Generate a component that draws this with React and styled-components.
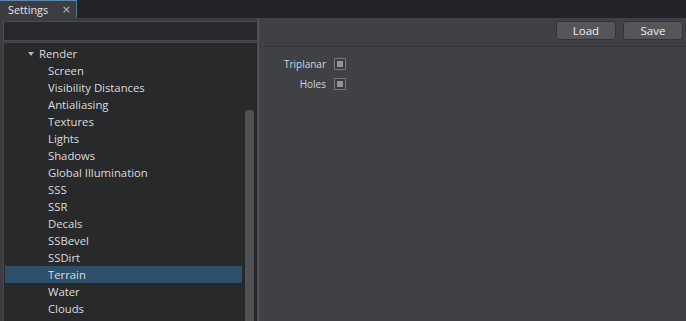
import React from "react";
import styled, { createGlobalStyle } from "styled-components";

const Global = createGlobalStyle`
  html, body { margin: 0; padding: 0; background: #232427; }
  body { font-family: "Open Sans", "Noto Sans", sans-serif; font-size: 11.3px; color: #d6d6d6; }
  * { box-sizing: border-box; }
`;

const Window = styled.div`
  width: 686px;
  height: 321px;
  display: flex;
  flex-direction: column;
  overflow: hidden;
`;

const TabBar = styled.div`
  height: 18px;
  background: #222326;
  display: flex;
  align-items: stretch;
`;

const Tab = styled.div`
  width: 77px;
  background: #3b3d41;
  border-top: 1px solid #5d86aa;
  border-right: 1px solid #4f7496;
  display: flex;
  align-items: center;
  justify-content: space-between;
  padding: 0 5px 0 8px;
  color: #e6e6e6;
  font-size: 10.8px;
  line-height: 16px;
`;

const Close = styled.span`
  color: #b8b9bc;
  font-size: 11px;
  font-family: "DejaVu Sans", sans-serif;
`;

const Body = styled.div`
  flex: 1;
  display: flex;
  background: #3c3d41;
  min-height: 0;
`;

const Left = styled.div`
  width: 258px;
  padding: 3px 0 0 3px;
  display: flex;
  flex-direction: column;
  gap: 1px;
`;

const Search = styled.div`
  height: 20px;
  background: #27282b;
  border: 1px solid #4a4b4f;
`;

const Tree = styled.div`
  flex: 1;
  background: #28292b;
  border: 1px solid #47484c;
  border-bottom: none;
  padding: 2px 0 0 1px;
  position: relative;
  overflow: hidden;
`;

const Row = styled.div`
  height: 17px;
  width: 237px;
  display: flex;
  align-items: center;
  padding-left: ${(p) => p.$indent}px;
  background: ${(p) => (p.$selected ? "#2c5069" : "transparent")};
  color: #dcdcdc;
  white-space: nowrap;
`;

const Arrow = styled.span`
  width: 0;
  height: 0;
  border-left: 3.5px solid transparent;
  border-right: 3.5px solid transparent;
  border-top: 4px solid #b4b5b8;
  margin-right: 5px;
`;

const ScrollThumb = styled.div`
  position: absolute;
  left: 241px;
  top: 67px;
  width: 9px;
  bottom: 0;
  background: #505155;
  border-radius: 3px 3px 0 0;
`;

const Divider = styled.div`
  width: 1px;
  background: #56575b;
`;

const Right = styled.div`
  flex: 1;
  background: #404145;
  display: flex;
  flex-direction: column;
`;

const Toolbar = styled.div`
  height: 29px;
  margin-left: 5px;
  border-bottom: 1px solid #323337;
  display: flex;
  justify-content: flex-end;
  align-items: flex-start;
  gap: 7px;
  padding: 3px 3px 0 0;
`;

const Button = styled.button`
  width: 60px;
  height: 19px;
  background: #55565a;
  border: 1px solid #333438;
  border-radius: 3px;
  color: #ececec;
  font-family: "Open Sans", "Noto Sans", sans-serif;
  font-size: 11.5px;
  padding: 0;
  line-height: 16px;
`;

const Form = styled.div`
  display: grid;
  grid-template-columns: 67px 12px;
  column-gap: 8px;
  row-gap: 8px;
  padding: 11px 0 0 0;
  align-items: center;
`;

const Label = styled.span`
  text-align: right;
  color: #cfd5e0;
  font-size: 10px;
  line-height: 12px;
`;

const Check = styled.span`
  width: 12px;
  height: 12px;
  border: 1px solid #77787c;
  background: #3a3b3e;
  padding: 2px;
  display: block;
  &::after {
    content: "";
    display: block;
    width: 6px;
    height: 6px;
    background: #939498;
  }
`;

const items = [
  "Screen",
  "Visibility Distances",
  "Antialiasing",
  "Textures",
  "Lights",
  "Shadows",
  "Global Illumination",
  "SSS",
  "SSR",
  "Decals",
  "SSBevel",
  "SSDirt",
  "Terrain",
  "Water",
  "Clouds",
];

export default function App() {
  return (
    <>
      <Global />
      <Window>
        <TabBar>
          <Tab>
            <span>Settings</span>
            <Close>×</Close>
          </Tab>
        </TabBar>
        <Body>
          <Left>
            <Search />
            <Tree>
              <Row $indent={23}>
                <Arrow />
                Render
              </Row>
              {items.map((t) => (
                <Row key={t} $indent={43} $selected={t === "Terrain"}>
                  {t}
                </Row>
              ))}
              <ScrollThumb />
            </Tree>
          </Left>
          <Divider />
          <Right>
            <Toolbar>
              <Button>Load</Button>
              <Button>Save</Button>
            </Toolbar>
            <Form>
              <Label>Triplanar</Label>
              <Check />
              <Label>Holes</Label>
              <Check />
            </Form>
          </Right>
        </Body>
      </Window>
    </>
  );
}
